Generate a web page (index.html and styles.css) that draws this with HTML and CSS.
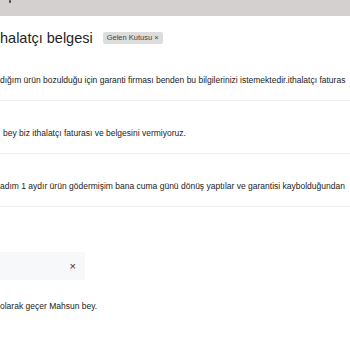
FILE: index.html
```html
<!DOCTYPE html>
<html lang="tr">
<head>
<meta charset="utf-8">
<title>ithalatçı belgesi</title>
<link rel="stylesheet" href="styles.css">
</head>
<body>
<div class="topbar"><span class="dot"></span></div>
<main class="thread">
  <header class="subject">
    <h1 class="title">halatçı belgesi</h1>
    <span class="chip">Gelen Kutusu <span class="chip-x">×</span></span>
  </header>
  <div class="msg">dığım ürün bozulduğu için garanti firması benden bu bilgilerinizi istemektedir.ithalatçı faturas</div>
  <div class="msg msg-indent">bey biz ithalatçı faturası ve belgesini vermiyoruz.</div>
  <div class="msg">adım 1 aydır ürün gödermişim bana cuma günü dönüş yaptılar ve garantisi kaybolduğundan</div>
  <div class="quote-box"><span class="close">×</span></div>
  <p class="last">olarak geçer Mahsun bey.</p>
</main>
</body>
</html>
```
FILE: styles.css
```css
html, body {
  margin: 0;
  padding: 0;
  width: 350px;
  height: 350px;
  overflow: hidden;
  background: #ffffff;
  font-family: "Liberation Sans", Arial, sans-serif;
  color: #222222;
}

.topbar {
  height: 16px;
  background: #d4d0d0;
  display: flex;
}

.dot {
  width: 2px;
  height: 3px;
  margin: 0 0 0 9px;
  background: #444444;
  border-radius: 1px;
}

.thread {
  display: flex;
  flex-direction: column;
}

.subject {
  height: 32px;
  display: flex;
  align-items: center;
  gap: 10px;
  padding-top: 11px;
  box-sizing: border-box;
}

.title {
  margin: 0;
  font-weight: 400;
  font-size: 14.5px;
  line-height: 18px;
  color: #1f1f1f;
  white-space: nowrap;
}

.chip {
  background: #dddddd;
  color: #444444;
  font-size: 7.5px;
  line-height: 12px;
  height: 12px;
  padding: 0 4px;
  border-radius: 2px;
  white-space: nowrap;
}

.chip-x {
  font-size: 7.5px;
}

.msg {
  height: 53px;
  box-sizing: border-box;
  padding-top: 27px;
  font-size: 8.5px;
  line-height: 10px;
  white-space: nowrap;
  overflow: hidden;
  border-bottom: 1px solid #eeeeee;
}

.msg-indent {
  padding-left: 3px;
}

.quote-box {
  margin-top: 45px;
  width: 85px;
  height: 28px;
  background: #f7f8fa;
  display: flex;
  align-items: center;
  justify-content: flex-end;
  padding-right: 9px;
  box-sizing: border-box;
}

.close {
  font-size: 11px;
  line-height: 11px;
  color: #333333;
}

.last {
  margin: 21px 0 0;
  font-size: 8.5px;
  line-height: 10px;
  white-space: nowrap;
}
```
